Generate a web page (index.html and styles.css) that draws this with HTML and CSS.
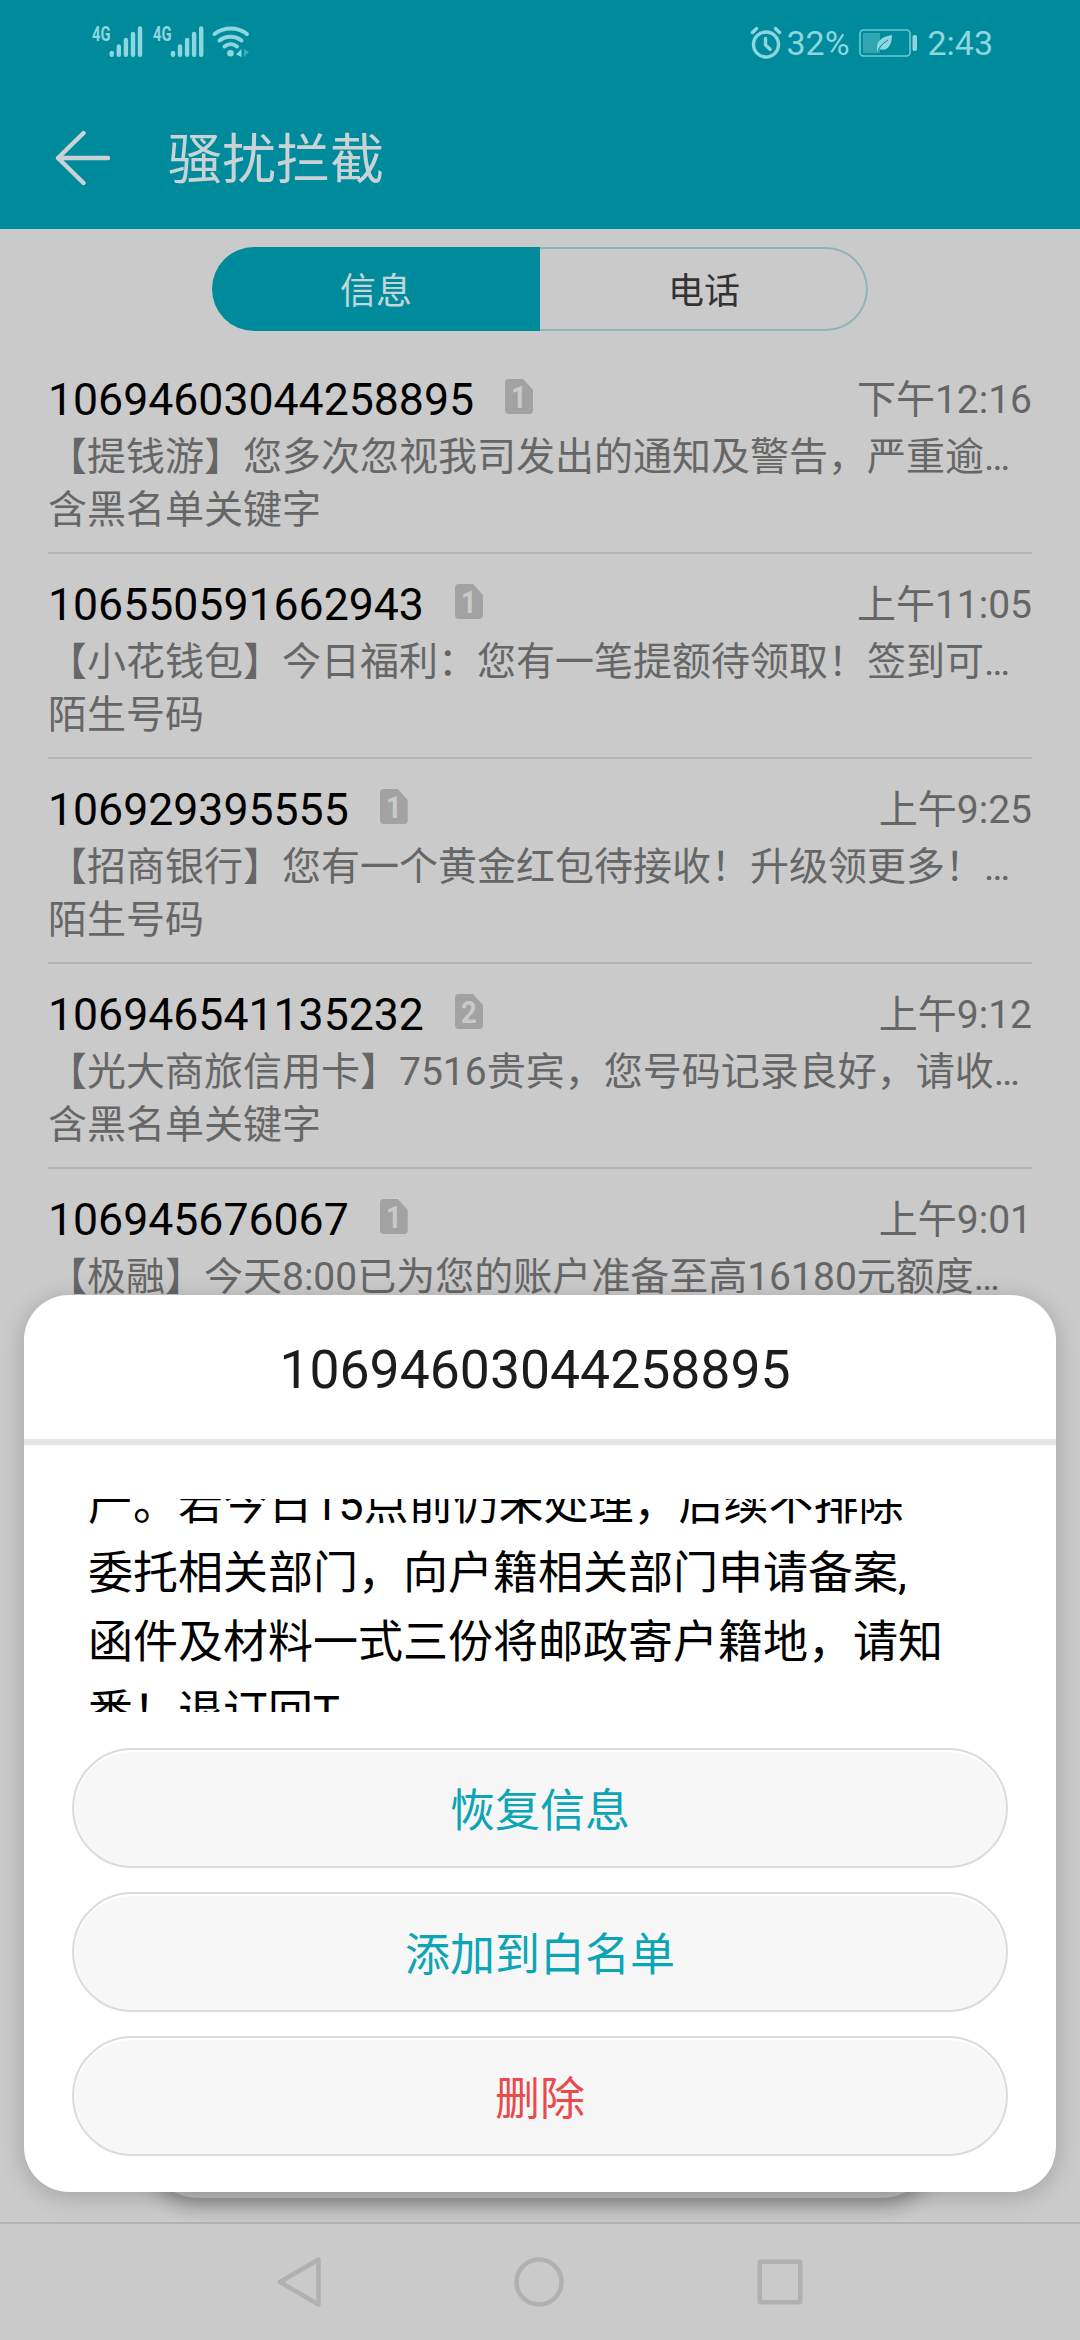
FILE: index.html
```html
<!DOCTYPE html>
<html lang="zh-CN">
<head>
<meta charset="utf-8">
<title>骚扰拦截</title>
<link rel="stylesheet" href="styles.css">
</head>
<body>
<div class="screen">
  <header class="header">
    <div class="status">
      <svg class="status-left" width="170" height="40" viewBox="0 0 170 40" fill="none" stroke="currentColor">
        <text class="net" x="2" y="20.500" textLength="18.500" lengthAdjust="spacingAndGlyphs">4G</text>
        <text class="net" x="63" y="20.500" textLength="18.500" lengthAdjust="spacingAndGlyphs">4G</text>
        <g stroke-width="4.4" stroke-linecap="round">
          <path d="M21.700 33v1.800M28.800 26.500v8.300M35.900 20v14.800M43 14v20.800M50 8.500v26.300"/>
          <path d="M83 33v1.800M90 26.500v8.300M97.100 20v14.800M104.100 14v20.800M111.200 8.500v26.300"/>
          <path d="M124.500 14a27 27 0 0 1 32.500 0M129.500 20.500a18 18 0 0 1 22 0M134.500 26.500a10 10 0 0 1 12.500 0" stroke-width="4"/>
        </g>
        <circle cx="140.500" cy="33.200" r="3.300" fill="currentColor" stroke="none"/>
        <path d="M151.500 29v8l-5.500-2.500z" fill="currentColor" stroke="none"/>
        <path d="M154 29v8l5-5z" fill="currentColor" stroke="none" opacity=".45"/>
      </svg>
      <div class="status-right">
        <svg width="32" height="34" viewBox="0 0 32 34" fill="none" stroke="currentColor" stroke-width="3.400" stroke-linecap="round" stroke-linejoin="round">
          <circle cx="16" cy="18.500" r="12.500"/><path d="M15.500 12.500v6.500l4.500 4.300M2.500 6.500l4-4M25.500 2.500l4 4" />
        </svg>
        <span class="pct">32%</span>
        <svg class="battery" width="60" height="30" viewBox="0 0 60 30">
          <rect x="1" y="2" width="50" height="26" rx="3.500" fill="none" stroke="currentColor" stroke-width="1.600" opacity=".8"/>
          <rect x="4" y="5" width="17" height="20" fill="currentColor" opacity=".35"/>
          <rect x="53.500" y="7" width="4.500" height="16" rx="2" fill="currentColor"/>
          <path d="M18 23c-1-9 3-14 15-16c0 11-5 17-13 14l-1 2z" fill="currentColor"/>
          <path d="M19 22q4-7 10-10" fill="none" stroke="#008b9c"/>
        </svg>
        <span class="clock">2:43</span>
      </div>
    </div>
    <div class="appbar">
      <svg width="56" height="56" viewBox="0 0 56 56" fill="none" stroke="currentColor" stroke-width="4.400" stroke-linecap="round" stroke-linejoin="round"><path d="M53 28H3M28.500 3L3 28l25.500 25"/></svg>
      <h1>骚扰拦截</h1>
    </div>
  </header>

  <main class="content">
    <div class="tabs"><div class="tab active">信息</div><div class="tab">电话</div></div>
    <ul class="list">
      <li class="row">
        <div class="top"><span class="num">10694603044258895</span><span class="sim"><b>1</b></span><span class="time">下午12:16</span></div>
        <p>【提钱游】您多次忽视我司发出的通知及警告，严重逾…</p><p>含黑名单关键字</p>
      </li>
      <li class="row">
        <div class="top"><span class="num">106550591662943</span><span class="sim"><b>1</b></span><span class="time">上午11:05</span></div>
        <p>【小花钱包】今日福利：您有一笔提额待领取！签到可…</p><p>陌生号码</p>
      </li>
      <li class="row">
        <div class="top"><span class="num">106929395555</span><span class="sim"><b>1</b></span><span class="time">上午9:25</span></div>
        <p>【招商银行】您有一个黄金红包待接收！升级领更多！…</p><p>陌生号码</p>
      </li>
      <li class="row">
        <div class="top"><span class="num">106946541135232</span><span class="sim"><b>2</b></span><span class="time">上午9:12</span></div>
        <p>【光大商旅信用卡】7516贵宾，您号码记录良好，请收…</p><p>含黑名单关键字</p>
      </li>
      <li class="row last">
        <div class="top"><span class="num">106945676067</span><span class="sim"><b>1</b></span><span class="time">上午9:01</span></div>
        <p>【极融】今天8:00已为您的账户准备至高16180元额度…</p>
      </li>
    </ul>
  </main>

  <nav class="navbar">
    <svg width="50" height="54" viewBox="0 0 50 54"><path d="M43.500 4.500v45L5 27z"/></svg>
    <svg width="54" height="54" viewBox="0 0 54 54"><circle cx="27" cy="27" r="22.500"/></svg>
    <svg width="54" height="54" viewBox="0 0 54 54"><rect x="6.700" y="6.700" width="40.600" height="40.600" rx="1.500"/></svg>
  </nav>

  <div class="pill"></div>
  <section class="dialog">
    <h2>10694603044258895</h2>
    <div class="body"><div class="message">产。若今日15点前仍未处理，后续不排除<br>委托相关部门，向户籍相关部门申请备案,<br>函件及材料一式三份将邮政寄户籍地，请知<br>悉！退订回T</div></div>
    <div class="actions">
      <button>恢复信息</button>
      <button>添加到白名单</button>
      <button class="danger">删除</button>
    </div>
  </section>
</div>
</body>
</html>
```

FILE: styles.css
```css
* { box-sizing: border-box; margin: 0; padding: 0; }
body { font-family: Roboto, "Noto Sans CJK SC", sans-serif; background: #cacaca; }
.screen { position: relative; width: 1080px; height: 2340px; display: flex; flex-direction: column; overflow: hidden; }
svg { display: block; flex: none; }

.header { height: 229px; background: #008b9c; flex: none; }
.status { height: 86px; padding: 20px 87px 0 90px; display: flex; justify-content: space-between; align-items: flex-start; color: #8ed6df; }
.net { font: 700 20px Roboto, sans-serif; fill: currentColor; stroke: none; }
.status-right { display: flex; align-items: center; height: 46px; font-size: 34px; line-height: 46px; }
.pct { margin-left: 4px; width: 66px; }
.battery { margin-left: 7px; }
.clock { margin-left: 8px; }
.appbar { display: flex; align-items: center; height: 143px; padding-left: 55px; color: #c9d3d5; }
h1 { margin-left: 57px; padding-top: 7px; font-size: 54px; font-weight: 400; line-height: 60px; }

.content { flex: 1; min-height: 0; padding: 18px 48px 0; overflow: hidden; }
.tabs { display: flex; width: 656px; height: 84px; margin: 0 auto; }
.tab { width: 328px; border: 2px solid #8eb4b8; border-left: 0; border-radius: 0 42px 42px 0; text-align: center; font-size: 36px; line-height: 86px; color: #333; }
.tab.active { border: 0; border-radius: 42px 0 0 42px; background: #008b9c; line-height: 90px; color: #c2d5d7; }
.tab:not(.active) { padding-left: 2px; }
.list { list-style: none; padding-top: 18px; }
.row { height: 205px; padding-top: 21px; border-bottom: 2px solid #b5b5b5; }
.row.last { height: 844px; }
.top { display: flex; align-items: center; height: 61px; padding-bottom: 1px; }
.num { font-size: 44.6px; color: #000; }
.sim { width: 28px; height: 35px; margin: -7px 0 0 31px; border-radius: 4px; background: #a2a2a2; clip-path: polygon(0 0, 18px 0, 100% 11px, 100% 100%, 0 100%); text-align: center; }
.sim b { display: inline-block; font-size: 31px; line-height: 37px; font-weight: 700; color: #cacaca; transform: scaleX(.88); }
.time { margin-left: auto; font-size: 39px; color: #666; line-height: 60px; }
.row p { font-size: 39px; line-height: 53px; color: #666; white-space: nowrap; }

.navbar { flex: none; height: 118px; border-top: 2px solid #b3b3b3; display: flex; justify-content: space-between; align-items: center; padding: 0 273px 0 275px; fill: none; stroke: #b1b1b1; stroke-width: 4.500; stroke-linejoin: round; }

.pill { position: absolute; left: 140px; top: 2078px; width: 800px; height: 120px; border-radius: 60px; background: #b9b9b9; box-shadow: 0 8px 18px rgba(0, 0, 0, .3); }
.dialog { position: absolute; left: 24px; top: 1295px; width: 1032px; height: 897px; border-radius: 45px; background: #fff; box-shadow: 0 4px 24px rgba(0, 0, 0, .2); display: flex; flex-direction: column; }
h2 { height: 150px; padding-right: 10px; border-bottom: 6px solid #e5e5e5; font-size: 53.500px; font-weight: 400; line-height: 149px; text-align: center; color: #1c1c1c; }
.body { height: 213px; margin: 54px 64px 36px; overflow: hidden; display: flex; flex-direction: column; justify-content: flex-end; }
.message { font-size: 45px; line-height: 69.330px; white-space: nowrap; color: #000; margin-bottom: -35px; }
.actions { display: flex; flex-direction: column; gap: 24px; padding: 0 48px; }
button { height: 120px; padding-bottom: 2px; border: 2px solid #dcdcdc; border-radius: 60px; background: #f7f7f7; box-shadow: inset 0 2px #fff; font: 400 45px Roboto, "Noto Sans CJK SC", sans-serif; color: #0ca5b5; }
.danger { color: #e84b4b; }
```
